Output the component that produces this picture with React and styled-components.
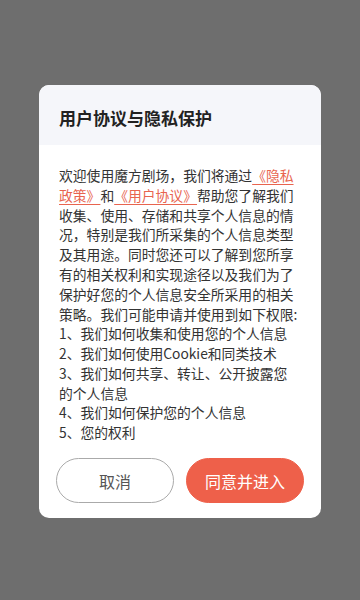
import React from "react";
import styled, { createGlobalStyle } from "styled-components";

const GlobalStyle = createGlobalStyle`
  html, body {
    margin: 0;
    padding: 0;
  }
  body {
    font-family: "Noto Sans CJK SC", "Noto Sans", sans-serif;
    background-color: #6e6e6e;
  }
`;

const Backdrop = styled.div`
  width: 360px;
  height: 600px;
  box-sizing: border-box;
  padding-top: 3px;
  background-color: #6e6e6e;
  display: flex;
  align-items: center;
  justify-content: center;
`;

const Card = styled.div`
  width: 282px;
  background-color: #fff;
  border-radius: 10px;
  overflow: hidden;
  display: flex;
  flex-direction: column;
`;

const Header = styled.div`
  height: 60px;
  box-sizing: border-box;
  padding: 5px 20px 0;
  display: flex;
  align-items: center;
  background-color: #f5f6fa;
  font-size: 17px;
  font-weight: 700;
  color: #222;
`;

const Body = styled.div`
  padding: 21px 22px 0 20px;
  font-size: 13.8px;
  line-height: 19.8px;
  color: #333;
`;

const Paragraph = styled.p`
  margin: 0;
`;

const Link = styled.a`
  color: #e8644f;
  text-decoration: underline;
  text-decoration-color: #e8644f;
  text-underline-offset: 3px;
  cursor: pointer;
`;

const Item = styled.div``;

const Actions = styled.div`
  display: flex;
  gap: 12px;
  padding: 15px 17px 15px;
`;

const Button = styled.button`
  flex: 1;
  height: 45px;
  border-radius: 23px;
  font-family: inherit;
  font-size: 16px;
  border: 1px solid ${props => (props.primary ? "#ee604a" : "#aaa")};
  background-color: ${props => (props.primary ? "#ee604a" : "#fff")};
  color: ${props => (props.primary ? "#fff" : "#555")};
  cursor: pointer;
`;

const items = [
  "1、我们如何收集和使用您的个人信息",
  "2、我们如何使用Cookie和同类技术",
  "3、我们如何共享、转让、公开披露您的个人信息",
  "4、我们如何保护您的个人信息",
  "5、您的权利"
];

const App = () => {
  return (
    <>
      <GlobalStyle />
      <Backdrop>
        <Card>
          <Header>用户协议与隐私保护</Header>
          <Body>
            <Paragraph>
              欢迎使用魔方剧场，我们将通过<Link>《隐私政策》</Link>和<Link>《用户协议》</Link>帮助您了解我们收集、使用、存储和共享个人信息的情况，特别是我们所采集的个人信息类型及其用途。同时您还可以了解到您所享有的相关权利和实现途径以及我们为了保护好您的个人信息安全所采用的相关策略。我们可能申请并使用到如下权限:
            </Paragraph>
            {items.map(text => (
              <Item key={text}>{text}</Item>
            ))}
          </Body>
          <Actions>
            <Button>取消</Button>
            <Button primary>同意并进入</Button>
          </Actions>
        </Card>
      </Backdrop>
    </>
  );
};

export default App;
